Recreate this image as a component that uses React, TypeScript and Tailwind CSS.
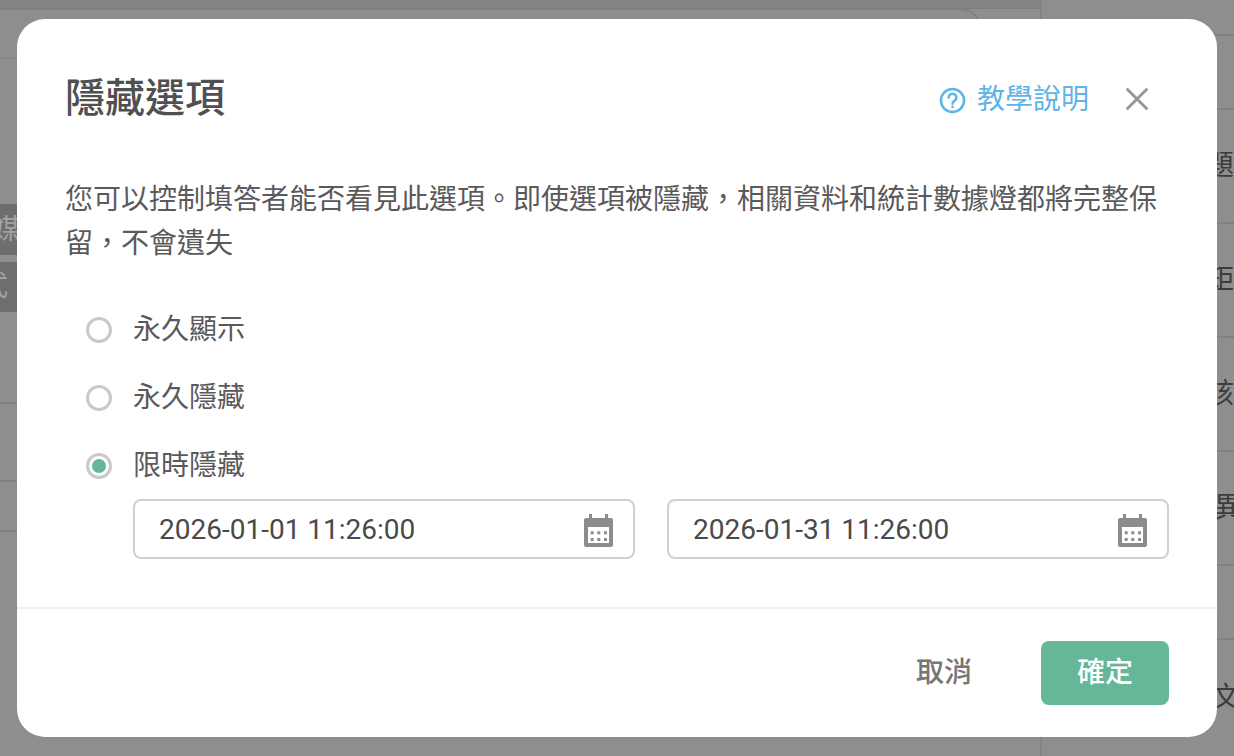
import { X } from 'lucide-react'

const CJK = 'font-["Roboto","Noto_Sans_CJK_TC",sans-serif]'

const BACK_ROWS = [
  { h: 'h-[74px]', label: '', mr: '' },
  { h: 'h-[114px]', label: '題', mr: 'mr-0' },
  { h: 'h-[114px]', label: '矩', mr: 'mr-0' },
  { h: 'h-[114px]', label: '該', mr: 'mr-0' },
  { h: 'h-[114px]', label: '異', mr: '-mr-[8px]' },
  { h: 'h-[74px]', label: '', mr: '' },
  { h: 'h-[118px]', label: '文', mr: '-mr-[6px]' },
]

function Backdrop() {
  return (
    <div className="absolute inset-0 flex bg-[#8f8e8f] overflow-hidden">
      <div className="flex-1 relative">
        <div className="h-[9px] bg-[#858485] border-b border-[#7e7d7e]" />
        <div className="w-[982px] h-[50px] -mt-px rounded-tr-[22px] border-t-2 border-r-2 border-[#828182] border-b-0" />
        <div className="border-b border-[#828182]" />
        <div className="mt-[145px] h-[51px] w-[17px] mb-[7px] bg-[#6f6e6f] text-[#a3a2a3] text-[28px] leading-[51px] whitespace-nowrap">
          <span className="inline-block -ml-[8px]">媒</span>
        </div>
        <div className="h-[50px] w-[17px] bg-[#6f6e6f] text-[#a3a2a3] text-[28px] leading-[50px] whitespace-nowrap overflow-hidden">
          <span className="inline-block -ml-[20px]">式</span>
        </div>
        <div className="mt-[90px] border-b-2 border-[#828182]" />
        <div className="mt-[76px] border-b-2 border-[#828182]" />
        <div className="mt-[48px] border-b-2 border-[#828182]" />
      </div>
      <div className="w-[194px] border-l-2 border-[#858485] pt-[34px]">
        {BACK_ROWS.map((r, i) => (
          <div key={i} className={`${r.h} border-t-2 border-[#828182] flex items-center justify-end`}>
            {r.label && <span className={`text-[28px] text-[#3d3c3d] whitespace-nowrap ${r.mr}`}>{r.label}</span>}
          </div>
        ))}
      </div>
    </div>
  )
}

function CalendarIcon() {
  return (
    <svg width="29" height="33" viewBox="0 0 29 33" className="shrink-0 mt-[2px]">
      <rect x="5" y="0" width="3" height="6" fill="#8d8c8d" />
      <rect x="21" y="0" width="3" height="6" fill="#8d8c8d" />
      <path d="M2 4h25a2 2 0 0 1 2 2v25a2 2 0 0 1-2 2H2a2 2 0 0 1-2-2V6a2 2 0 0 1 2-2z" fill="#8d8c8d" />
      <rect x="4" y="13" width="21" height="16" fill="#fff" />
      {[6.7, 13.3, 20].map(x =>
        [17.3, 24].map(y => <rect key={`${x}-${y}`} x={x} y={y} width="3" height="3" fill="#8d8c8d" />),
      )}
    </svg>
  )
}

function Radio({ label, checked }: { label: string; checked?: boolean }) {
  return (
    <label className="flex items-center h-[68px]">
      <span className="ml-[20px] w-[26px] h-[26px] rounded-full border-[3px] border-[#c9c8ca] flex items-center justify-center shrink-0">
        {checked && <span className="w-[14px] h-[14px] rounded-full bg-[#65b797]" />}
      </span>
      <span className="ml-[21px] text-[28px] text-[#5a595b]">{label}</span>
    </label>
  )
}

function DateInput({ value }: { value: string }) {
  return (
    <div className="flex-1 h-[60px] border-2 border-[#d0cfd1] rounded-[8px] pl-[24px] pr-[20px] flex items-center justify-between">
      <span className="text-[28px] text-[#4a494b] pt-[2px]">{value}</span>
      <CalendarIcon />
    </div>
  )
}

export default function App() {
  return (
    <div className={`relative w-[1234px] h-[756px] overflow-hidden ${CJK}`}>
      <Backdrop />
      <div className="absolute inset-0 flex items-center justify-center">
        <div className="w-[1200px] h-[718px] bg-white rounded-[28px] flex flex-col">
          <div className="flex items-center justify-between pl-[49px] pr-[61px] pt-[51px]">
            <h1 className="text-[40px] leading-[58px] font-medium text-[#504f51] -ml-px">隱藏選項</h1>
            <div className="flex items-center mt-[2px]">
              <svg width="27" height="27" viewBox="0 0 28 28" fill="none" stroke="#5eb4e6" strokeWidth="2.6" strokeLinecap="round">
                <circle cx="14" cy="14" r="12" />
                <path d="M10 11a4 4 0 1 1 6.2 3.3c-1.4.9-2.2 1.6-2.2 3" />
                <path d="M14 20.6v.2" />
              </svg>
              <span className="ml-[11px] text-[28px] text-[#5eb4e6]">教學說明</span>
              <X className="ml-[29px] -mt-[3px] text-[#969597]" size={38} strokeWidth={1.8} />
            </div>
          </div>
          <p className="mt-[50px] ml-[48px] mr-[49px] text-[28px] leading-[44px] text-[#5a595b]">
            您可以控制填答者能否看見此選項。即使選項被隱藏，相關資料和統計數據燈都將完整保留，不會遺失
          </p>
          <div className="mt-[30px] ml-[49px] mr-[48px]">
            <Radio label="永久顯示" />
            <Radio label="永久隱藏" />
            <Radio label="限時隱藏" checked />
            <div className="ml-[67px] -mt-px flex gap-[32px]">
              <DateInput value="2026-01-01 11:26:00" />
              <DateInput value="2026-01-31 11:26:00" />
            </div>
          </div>
          <div className="mt-[48px] border-t-2 border-[#f0eff1] flex-1 flex items-start justify-end pt-[32px] pr-[48px]">
            <button className="h-[64px] text-[28px] font-medium text-[#767577] mr-[69px]">取消</button>
            <button className="w-[128px] h-[64px] rounded-[8px] bg-[#65b797] text-white text-[28px] font-medium">確定</button>
          </div>
        </div>
      </div>
    </div>
  )
}
